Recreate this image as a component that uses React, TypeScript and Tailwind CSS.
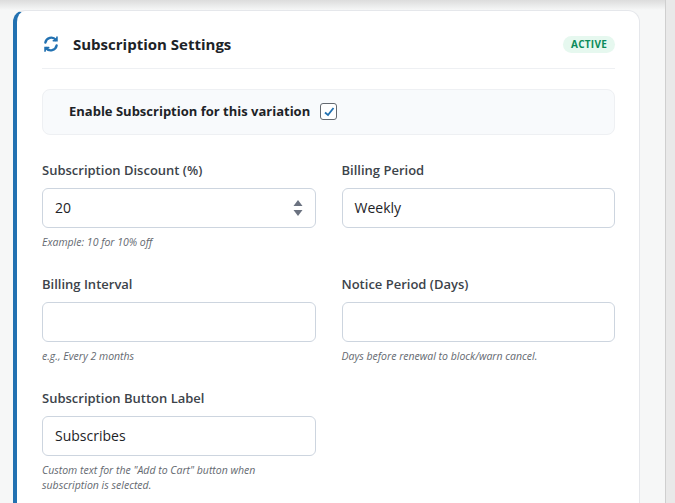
import React from "react";

const F = { fontFamily: '"Open Sans", "Noto Sans", sans-serif' };

function Field({ label, value, help, spinner }: { label: string; value?: string; help?: React.ReactNode; spinner?: boolean }) {
  return (
    <div className="flex flex-col">
      <div className="text-[13px] font-semibold text-[#3c434a] leading-[18px] h-[18px]">{label}</div>
      <div className="mt-[9px] h-[40px] rounded-[6px] border border-[#cdd5df] bg-white flex items-center px-[12px] text-[14px] text-[#1d2327]">
        <span className="flex-1">{value}</span>
        {spinner && (
          <svg width="10" height="18" viewBox="0 0 10 18"><path d="M5 1 L9.5 7 H0.5 Z" fill="#6b7280" /><path d="M5 17 L9.5 11 H0.5 Z" fill="#6b7280" /></svg>
        )}
      </div>
      {help && <div className="mt-[7px] text-[10.5px] italic text-[#646970] leading-[15px]">{help}</div>}
    </div>
  );
}

export default function App() {
  return (
    <div style={F} className="w-[675px] h-[503px] overflow-hidden bg-[#f6f7f7] relative">
      <div className="absolute top-0 left-0 right-0 h-[10px] bg-gradient-to-b from-[#dcdcdc] to-[#f6f7f7]" />
      <div className="absolute top-0 right-0 w-[10px] h-full bg-[#e9e9e9] border-l border-[#cfcfcf]" />
      <div className="pt-[10px] pl-[13px] w-[640px]">
        <div className="bg-white rounded-[12px] border border-[#e5e7eb] border-l-[4px] border-l-[#2271b1] pl-[25px] pr-[24px] pt-[22px] pb-[40px]">
          <div className="flex items-center justify-between pb-[12px] border-b border-[#eef0f3]">
            <div className="flex items-center gap-[13px]">
              <svg width="18" height="18" viewBox="0 0 24 24" fill="none" stroke="#2271b1" strokeWidth="3.2" strokeLinecap="round">
                <path d="M4.5 10a8 8 0 0 1 14-3.5" />
                <path d="M19.5 14a8 8 0 0 1-14 3.5" />
                <path d="M20 2.5v5h-5" fill="#2271b1" strokeWidth="2" />
                <path d="M4 21.5v-5h5" fill="#2271b1" strokeWidth="2" />
              </svg>
              <span className="text-[15px] font-bold text-[#1d2327]">Subscription Settings</span>
            </div>
            <span className="text-[10px] font-bold text-[#0a8a5a] bg-[#e6f8ef] rounded-full px-[8px] py-[1px] tracking-wide">ACTIVE</span>
          </div>
          <div className="mt-[20px] h-[46px] rounded-[8px] border border-[#eef0f3] bg-[#f8fafc] flex items-center pl-[26px] gap-[10px]">
            <span className="text-[13px] font-bold text-[#1d2327]">Enable Subscription for this variation</span>
            <span className="w-[17px] h-[17px] rounded-[3px] border border-[#646970] bg-white flex items-center justify-center">
              <svg width="12" height="12" viewBox="0 0 12 12"><path d="M2 6.5 L5 9 L10.5 2" fill="none" stroke="#2271b1" strokeWidth="1.8" /></svg>
            </span>
          </div>
          <div className="mt-[26px] grid grid-cols-2 gap-x-[26px] gap-y-[25px]">
            <Field label="Subscription Discount (%)" value="20" spinner help="Example: 10 for 10% off" />
            <Field label="Billing Period" value="Weekly" />
            <Field label="Billing Interval" help="e.g., Every 2 months" />
            <Field label="Notice Period (Days)" help="Days before renewal to block/warn cancel." />
            <Field label="Subscription Button Label" value="Subscribes" help={<>Custom text for the "Add to Cart" button when<br />subscription is selected.</>} />
          </div>
        </div>
      </div>
    </div>
  );
}
